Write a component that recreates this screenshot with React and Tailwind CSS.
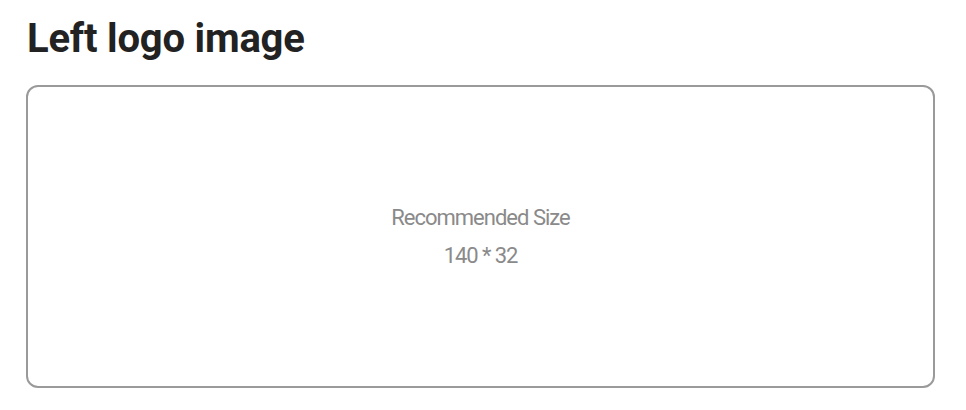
export default function App() {
  return (
    <div className="w-[966px] h-[410px] bg-white pl-[26px] pt-[13px]" style={{ fontFamily: "Roboto, 'Liberation Sans', sans-serif" }}>
      <h1 className="text-[40px] leading-[52px] font-bold text-[#222222] pl-[1px] tracking-[-0.005em]">Left logo image</h1>
      <div className="mt-[20px] w-[909px] h-[303px] border-2 border-[#9a9a9a] rounded-[12px] flex flex-col items-center justify-center gap-[11px]">
        <div className="text-[22px] leading-[26px] text-[#8a8a8a] tracking-[-0.045em] pt-[1px]">Recommended Size</div>
        <div className="text-[22px] leading-[26px] text-[#8a8a8a] tracking-[-0.05em] pt-[1px]">140 * 32</div>
      </div>
    </div>
  );
}
